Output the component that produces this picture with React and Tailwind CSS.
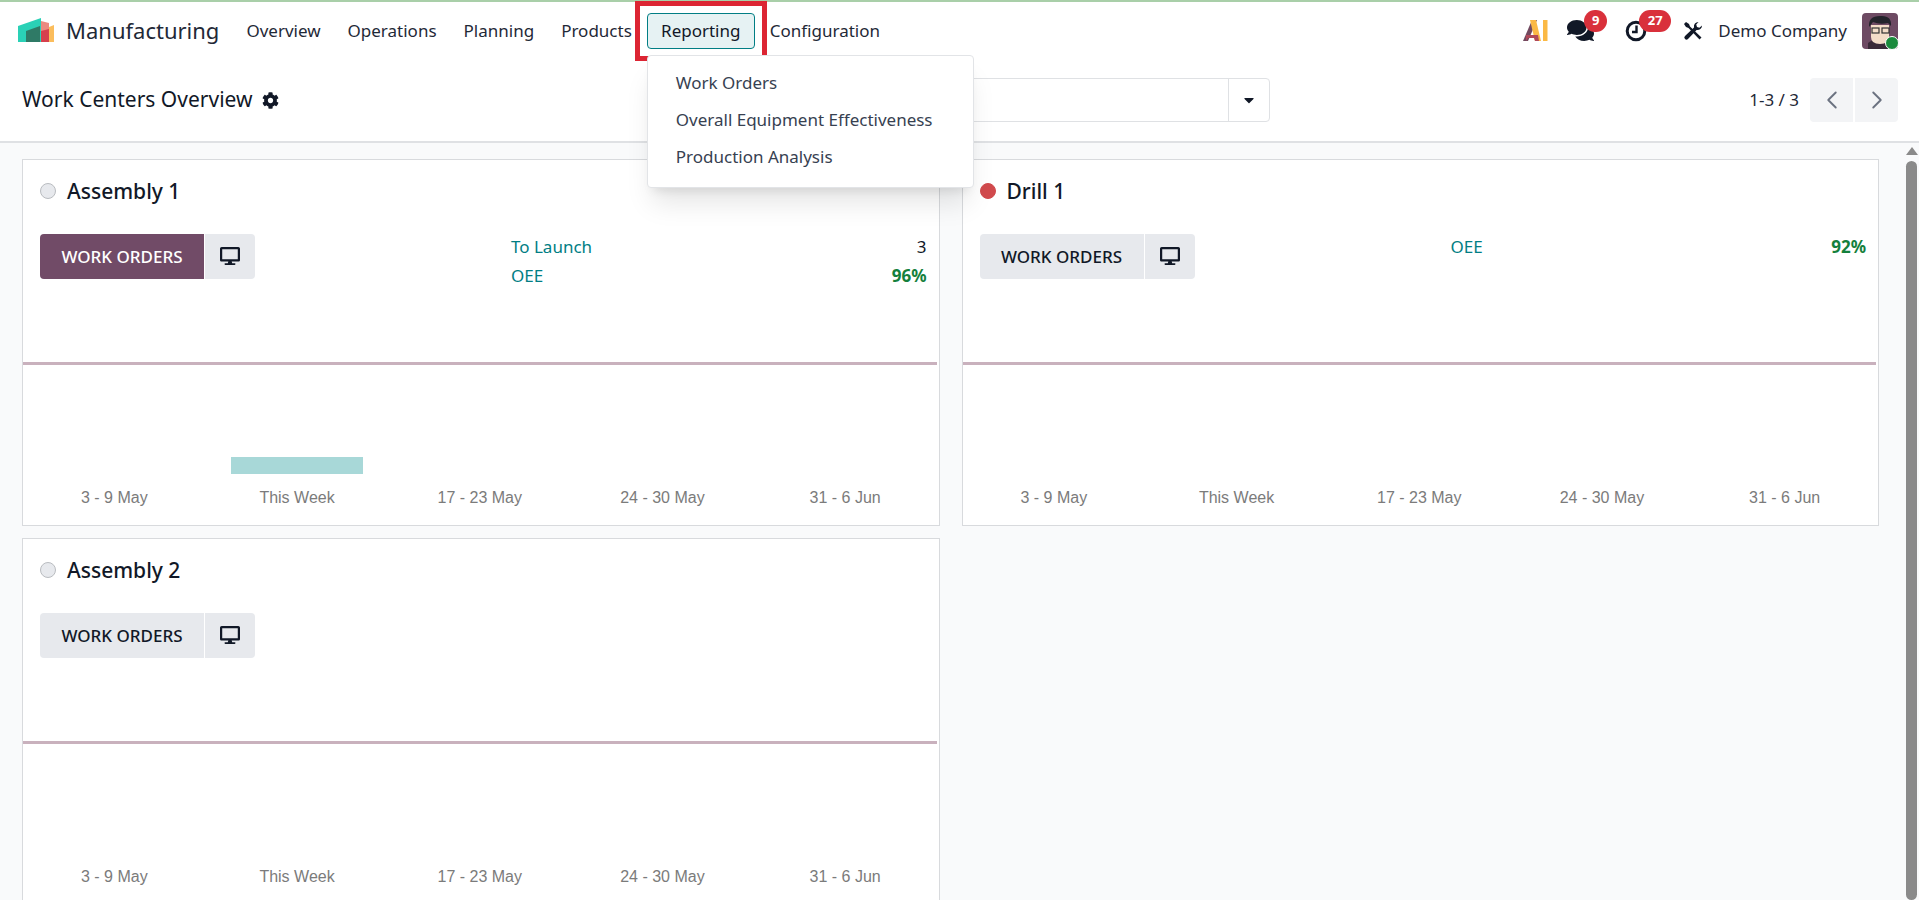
import React from 'react';
import { FaCog, FaDesktop, FaComments, FaCaretDown } from 'react-icons/fa';
import { ChevronLeft, ChevronRight } from 'lucide-react';

const navItems = ['Overview', 'Operations', 'Planning', 'Products'];
const weeks = ['3 - 9 May', 'This Week', '17 - 23 May', '24 - 30 May', '31 - 6 Jun'];

const Logo = () => (
  <svg width="36" height="25" viewBox="0 0 36 25">
    <path d="M0 8 L23 0 V24 H0 Z" fill="#2ad1b6" />
    <path d="M8 13 L22 8 V24 H8 Z" fill="#2f7a66" />
    <path d="M23 3 L31 5 V24 H23 Z" fill="#ec8a80" />
    <path d="M23 13 L31 11 V24 H23 Z" fill="#d6404e" />
    <path d="M31 9 L36 7 V24 H31 Z" fill="#fbbd5c" />
  </svg>
);

const AiLogo = () => (
  <svg width="25" height="21" viewBox="0 0 25 21">
    <path d="M0 21 L9 0 H14 L5 21 Z" fill="#71495f" />
    <path d="M7 0 H13 L18 21 H12 Z" fill="#fbb945" />
    <path d="M3 15 H15 L16 21 H12 L11 18 H5 L3 21 Z" fill="#b0495a" />
    <rect x="20" y="0" width="4.5" height="21" fill="#fbb945" />
  </svg>
);

const ClockIcon = () => (
  <svg width="22" height="22" viewBox="0 0 22 22" fill="none" stroke="#111827">
    <circle cx="11" cy="11" r="8.8" strokeWidth="3" />
    <path d="M11.5 5.5 V12 H7" strokeWidth="2.4" />
  </svg>
);

const ToolsIcon = () => (
  <svg width="20" height="20" viewBox="0 0 20 20" fill="#111827">
    <path d="M1 3 L3 1 L6 3 L7 5.5 L18.5 16.5 L16.5 18.5 L5.5 7 L3 6 Z" />
    <path d="M19 4.5 A4.5 4.5 0 0 1 13.6 9 L5 18 A2 2 0 0 1 2 15 L11 6.4 A4.5 4.5 0 0 1 15.5 1 L13.2 3.6 L14 6 L16.4 6.8 Z" />
  </svg>
);

const Avatar = () => (
  <div className="relative w-9 h-9">
    <svg width="36" height="36" viewBox="0 0 36 36" className="rounded">
      <rect width="36" height="36" fill="#6d4a63" />
      <path d="M6 36 V30 L12 26 H24 L30 30 V36 Z" fill="#3a2a38" />
      <path d="M9 12 H27 V24 Q27 31 18 31 Q9 31 9 24 Z" fill="#f3dcc8" />
      <path d="M7 14 Q6 3 18 3 Q30 2 29 13 L26 10 Q18 12 11 9 Z" fill="#23232b" />
      <rect x="10" y="15" width="7" height="5" fill="none" stroke="#333" strokeWidth="1.2" />
      <rect x="20" y="15" width="7" height="5" fill="none" stroke="#333" strokeWidth="1.2" />
    </svg>
    <span className="absolute right-[-1px] bottom-[-1px] w-[14px] h-[14px] rounded-full bg-[#1a8a3c] border border-white" />
  </div>
);

const Badge = ({ children, className }) => (
  <span className={`absolute h-[22px] rounded-full bg-[#d9303b] text-white text-[13px] font-bold flex items-center justify-center ${className}`}>
    {children}
  </span>
);

const WeekChart = ({ bar }) => (
  <div className="grid grid-cols-5 pr-[2px]">
    {weeks.map((w, i) => (
      <div key={w} className="flex flex-col items-center">
        <div className="h-[17px] w-full flex justify-center">
          {bar && i === 1 && <div className="w-[132px] h-[17px] bg-[#a8d8d8]" />}
        </div>
        <div className="mt-[15px] text-[16px] leading-[18px] text-[#7b7b7b] font-['Liberation_Sans',sans-serif]">{w}</div>
      </div>
    ))}
  </div>
);

const Card = ({ title, dot, active, stats, bar, className }) => (
  <div className={`bg-white border border-[#d8dadd] flex flex-col ${className}`}>
    <div className="flex items-center gap-[11px] h-[60px] pt-[1px] pl-[17px]">
      <span className={`w-[16px] h-[16px] rounded-full border ${dot === 'red' ? 'bg-[#d14a4d] border-[#d14a4d]' : 'bg-[#e7e9ed] border-[#b9bcc0]'}`} />
      <span className="text-[21px] leading-7 font-medium text-[#111827]">{title}</span>
    </div>
    <div className="flex h-[142px] pt-[14px] pl-[17px] pr-[12px]">
      <div className="flex gap-[1px] w-[471px] h-[45px]">
        <button className={`w-[164px] h-[45px] rounded-l text-[17px] font-medium ${active ? 'bg-[#714b67] text-white' : 'bg-[#e7e9ed] text-[#111827]'}`}>WORK ORDERS</button>
        <button className="w-[50px] h-[45px] rounded-r bg-[#e7e9ed] flex items-center justify-center text-[#111827] pb-[2px]">
          <FaDesktop size={20} />
        </button>
      </div>
      <div className="flex-1 flex flex-col gap-[5px] pt-[1px]">
        {stats.map((s) => (
          <div key={s.label} className="flex justify-between text-[17px] leading-[24px]">
            <span className="text-[#017e84]">{s.label}</span>
            <span className={s.green ? 'text-[#14803c] font-bold' : 'text-[#111827]'}>{s.value}</span>
          </div>
        ))}
      </div>
    </div>
    <div className="h-[3px] mr-[2px] bg-[#c9b1bd]" />
    <div className="pt-[92px]">
      <WeekChart bar={bar} />
    </div>
  </div>
);

const App = () => {
  return (
    <div className="h-screen overflow-hidden flex flex-col bg-white text-[#111827] font-['Noto_Sans',sans-serif]">
      <div className="h-[2px] bg-[#a9cfa9]" />

      {/* top bar */}
      <div className="relative h-[57px] flex items-center pl-[18px] pr-[21px]">
        <Logo />
        <span className="ml-[12px] text-[22px] text-[#1f2937]">Manufacturing</span>
        <div className="ml-[27px] flex items-center gap-[27px] text-[17px] text-[#1f2937]">
          {navItems.map((n) => <span key={n}>{n}</span>)}
        </div>
        <div className="relative ml-[15px]">
          <div className="absolute -inset-[12px] border-[5px] border-[#dc2533] pointer-events-none" />
          <div className="h-[36px] w-[108px] flex items-center justify-center rounded border border-[#017e84] bg-[#e6f2f3] text-[17px]">Reporting</div>
          <div className="absolute z-20 left-0 top-[42px] w-[327px] h-[133px] py-[9px] bg-white border border-[#e2e4e7] rounded shadow-xl text-[17px] text-[#374151]">
            <div className="h-[37px] pl-[28px] flex items-center">Work Orders</div>
            <div className="h-[37px] pl-[28px] flex items-center">Overall Equipment Effectiveness</div>
            <div className="h-[37px] pl-[28px] flex items-center">Production Analysis</div>
          </div>
        </div>
        <span className="ml-[15px] text-[17px] text-[#1f2937]">Configuration</span>

        <div className="ml-auto flex items-center">
          <AiLogo />
          <div className="relative ml-[19px] w-[28px] h-[24px] flex items-center">
            <FaComments size={27} />
            <Badge className="left-[17px] -top-[9px] w-[23px]">9</Badge>
          </div>
          <div className="relative ml-[30px] w-[24px] h-[24px] flex items-center">
            <ClockIcon />
            <Badge className="left-[14px] -top-[9px] w-[32px]">27</Badge>
          </div>
          <div className="ml-[34px]"><ToolsIcon /></div>
          <span className="ml-[15px] text-[17px] text-[#1f2937]">Demo Company</span>
          <div className="ml-[15px]"><Avatar /></div>
        </div>
      </div>

      {/* control panel */}
      <div className="h-[84px] shrink-0 flex items-center border-b-2 border-[#dfe1e4] pl-[22px] pr-[21px]">
        <div className="flex items-center w-[628px]">
          <span className="text-[21px]">Work Centers Overview</span>
          <FaCog size={17} className="ml-[10px] text-[#111827]" />
        </div>
        <div className="w-[620px] h-[44px] flex justify-end border border-[#dfe1e4] rounded">
          <div className="w-[41px] flex items-center justify-center border-l border-[#dfe1e4]">
            <FaCaretDown size={16} />
          </div>
        </div>
        <div className="ml-auto flex items-center">
          <span className="text-[17px] text-[#1f2937]">1-3 / 3</span>
          <div className="ml-[11px] flex gap-[2px]">
            <button className="w-[43px] h-[44px] rounded-l bg-[#f3f4f6] flex items-center justify-center text-[#6b7280]">
              <ChevronLeft size={30} strokeWidth={1.5} />
            </button>
            <button className="w-[43px] h-[44px] rounded-r bg-[#f3f4f6] flex items-center justify-center text-[#6b7280]">
              <ChevronRight size={30} strokeWidth={1.5} />
            </button>
          </div>
        </div>
      </div>

      {/* cards */}
      <div className="relative flex-1 min-h-0 overflow-hidden bg-[#f9fafb] pt-[16px] pl-[22px] pr-[40px]">
        <div className="grid grid-cols-2 gap-x-[22px] gap-y-[12px] items-start">
          <Card title="Assembly 1" dot="grey" active bar className="h-[367px]"
            stats={[{ label: 'To Launch', value: '3' }, { label: 'OEE', value: '96%', green: true }]} />
          <Card title="Drill 1" dot="red" className="h-[367px]"
            stats={[{ label: 'OEE', value: '92%', green: true }]} />
          <Card title="Assembly 2" dot="grey" className="h-[367px]" stats={[]} />
        </div>
        {/* scrollbar */}
        <div className="absolute right-[2px] top-[4px] bottom-0 w-[11px] flex flex-col items-center gap-[6px]">
          <div className="w-0 h-0 border-x-[6px] border-x-transparent border-b-[8px] border-b-[#8a8a8a]" />
          <div className="w-[11px] flex-1 rounded-full bg-[#8a8a8a]" />
        </div>
      </div>
    </div>
  );
};

export default App;
